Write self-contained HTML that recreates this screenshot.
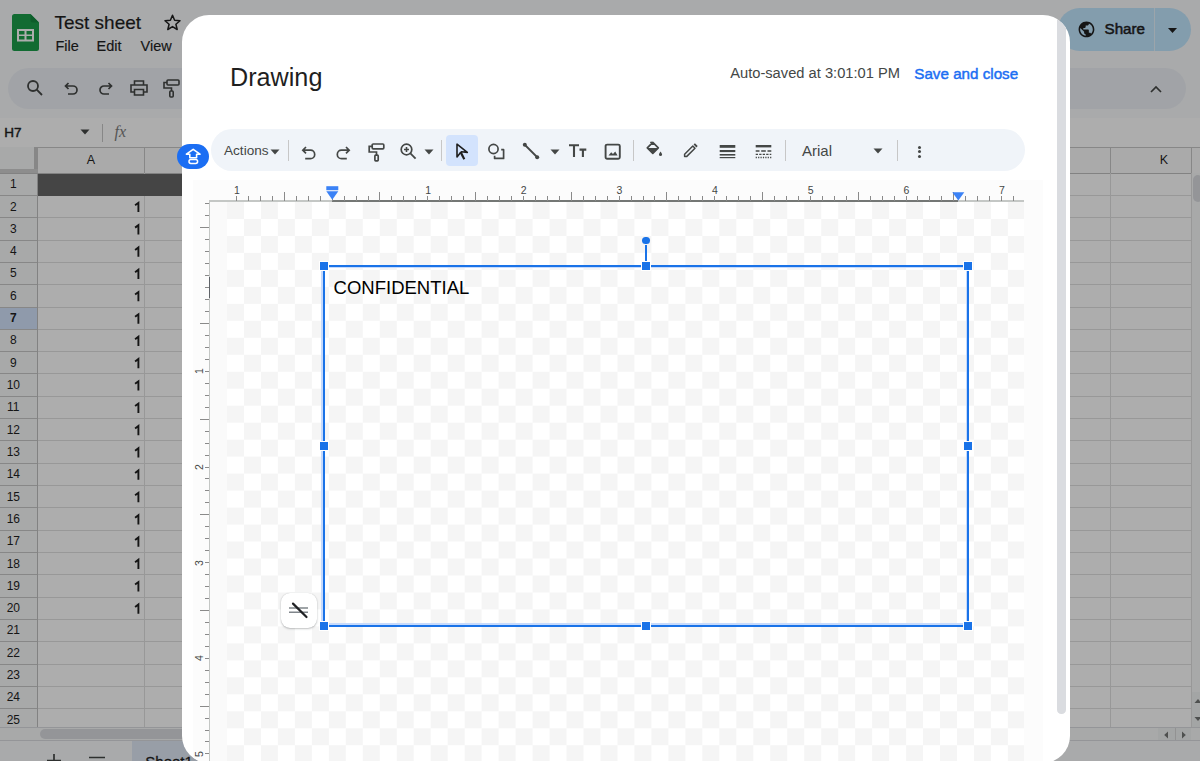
<!DOCTYPE html>
<html><head><meta charset="utf-8"><title>Drawing</title>
<style>
html,body{margin:0;padding:0;}
body{width:1200px;height:761px;position:relative;overflow:hidden;background:#aaabad;font-family:"Liberation Sans", sans-serif;}
.a{position:absolute;}
svg.a{overflow:visible;}
</style></head><body>
<div class="a" id="sheet" style="left:0;top:0;width:1200px;height:761px;background:#f9fbfd;overflow:hidden">
<svg class="a" style="left:12.00px;top:14.00px;" width="27" height="37" viewBox="0 0 27 37"><path d="M2.5 0H18.5L27 8.5V34.5A2.5 2.5 0 0 1 24.5 37H2.5A2.5 2.5 0 0 1 0 34.5V2.5A2.5 2.5 0 0 1 2.5 0Z" fill="#1b9e4b"/><path d="M18.5 0L27 8.5H20.5A2 2 0 0 1 18.5 6.5Z" fill="#148a3e"/><rect x="5" y="15" width="17" height="12.5" fill="#ffffff"/><rect x="7" y="17" width="5.5" height="3.5" fill="#1b9e4b"/><rect x="14.5" y="17" width="5.5" height="3.5" fill="#1b9e4b"/><rect x="7" y="22" width="5.5" height="3.5" fill="#1b9e4b"/><rect x="14.5" y="22" width="5.5" height="3.5" fill="#1b9e4b"/></svg>
<div class="a" style="left:54.50px;top:12.82px;font-size:19px;line-height:1;color:#1f1f1f;font-weight:normal;white-space:nowrap;font-family:'Liberation Sans', sans-serif;-webkit-text-stroke:0.2px #1f1f1f;">Test sheet</div>
<svg class="a" style="left:163.00px;top:13.00px;" width="19" height="19" viewBox="0 0 19 19"><path d="M9.5 2.2L11.6 7.3L17 7.7L12.9 11.2L14.2 16.5L9.5 13.6L4.8 16.5L6.1 11.2L2 7.7L7.4 7.3Z" fill="none" stroke="#1f1f1f" stroke-width="1.5" stroke-linejoin="round"/></svg>
<div class="a" style="left:55.50px;top:39.23px;font-size:14.5px;line-height:1;color:#1f1f1f;font-weight:normal;white-space:nowrap;font-family:'Liberation Sans', sans-serif;-webkit-text-stroke:0.15px #1f1f1f;">File</div>
<div class="a" style="left:96.50px;top:39.23px;font-size:14.5px;line-height:1;color:#1f1f1f;font-weight:normal;white-space:nowrap;font-family:'Liberation Sans', sans-serif;-webkit-text-stroke:0.15px #1f1f1f;">Edit</div>
<div class="a" style="left:140.50px;top:39.23px;font-size:14.5px;line-height:1;color:#1f1f1f;font-weight:normal;white-space:nowrap;font-family:'Liberation Sans', sans-serif;-webkit-text-stroke:0.15px #1f1f1f;">View</div>
<div class="a" style="left:0.00px;top:117.50px;width:1200.00px;height:29.60px;background:#ffffff;"></div>
<div class="a" style="left:7.50px;top:67.50px;width:1178.50px;height:41.50px;background:#eef1f6;border-radius:21px;"></div>
<svg class="a" style="left:26.00px;top:79.00px;" width="18" height="18" viewBox="0 0 18 18"><circle cx="7" cy="7" r="5" fill="none" stroke="#444746" stroke-width="1.8"/><path d="M10.7 10.7L16 16" stroke="#444746" stroke-width="1.8"/></svg>
<svg class="a" style="left:64.00px;top:80.00px;" width="15" height="15" viewBox="0 0 15 15"><path d="M4.5 3L1.5 6L4.5 9M1.8 6H9A4 4 0 0 1 9 14H4" fill="none" stroke="#444746" stroke-width="1.7"/></svg>
<svg class="a" style="left:98.00px;top:80.00px;" width="15" height="15" viewBox="0 0 15 15"><path d="M10.5 3L13.5 6L10.5 9M13.2 6H6A4 4 0 0 0 6 14H11" fill="none" stroke="#444746" stroke-width="1.7"/></svg>
<svg class="a" style="left:130.00px;top:80.00px;" width="18" height="16" viewBox="0 0 18 16"><path d="M4.5 4.5V1H13.5V4.5M4.5 12H1V5H17V12H13.5M4.5 9.5H13.5V15H4.5Z" fill="none" stroke="#444746" stroke-width="1.6"/></svg>
<svg class="a" style="left:163.00px;top:79.00px;" width="17" height="19" viewBox="0 0 17 19"><rect x="4" y="1" width="12" height="5" rx="1" fill="none" stroke="#444746" stroke-width="1.6"/><path d="M4 3.5H1V9H8.5V12" fill="none" stroke="#444746" stroke-width="1.6"/><rect x="6.8" y="12" width="3.4" height="6" rx="1" fill="none" stroke="#444746" stroke-width="1.6"/></svg>
<svg class="a" style="left:1149.00px;top:84.00px;" width="14" height="10" viewBox="0 0 14 10"><path d="M2 8L7 3L12 8" fill="none" stroke="#444746" stroke-width="1.7"/></svg>
<div class="a" style="left:1057.50px;top:8.00px;width:133.00px;height:43.00px;background:#c2e7ff;border-radius:21.5px;"></div>
<div class="a" style="left:1154.20px;top:8.00px;width:1.00px;height:43.00px;background:#e6f4fd;"></div>
<svg class="a" style="left:1076.80px;top:19.60px;" width="18.96" height="18.96" viewBox="0 0 24 24"><path fill="#1f1f1f" d="M12 2C6.48 2 2 6.48 2 12s4.48 10 10 10 10-4.48 10-10S17.52 2 12 2zm-1 17.93c-3.95-.49-7-3.85-7-7.93 0-.62.08-1.21.21-1.79L9 15v1c0 1.1.9 2 2 2v1.930zm6.9-2.54c-.26-.81-1-1.39-1.9-1.39h-1v-3c0-.55-.45-1-1-1H8v-2h2c.55 0 1-.45 1-1V7h2c1.1 0 2-.9 2-2v-.41c2.93 1.19 5 4.06 5 7.41 0 2.080-.8 3.97-2.1 5.39z"/></svg>
<div class="a" style="left:1104.50px;top:21.33px;font-size:15.2px;line-height:1;color:#1f1f1f;font-weight:normal;white-space:nowrap;font-family:'Liberation Sans', sans-serif;-webkit-text-stroke:0.5px #1f1f1f;">Share</div>
<svg class="a" style="left:1167.00px;top:27.00px;" width="11" height="7" viewBox="0 0 11 7"><path d="M1 1H10L5.5 6Z" fill="#1f1f1f"/></svg>
<div class="a" style="left:4.30px;top:125.57px;font-size:13.5px;line-height:1;color:#1f1f1f;font-weight:normal;white-space:nowrap;font-family:'Liberation Sans', sans-serif;-webkit-text-stroke:0.45px #1f1f1f;">H7</div>
<svg class="a" style="left:80.00px;top:129.00px;" width="10" height="6" viewBox="0 0 10 6"><path d="M0.5 0.5H9.5L5 5.5Z" fill="#444746"/></svg>
<div class="a" style="left:102.00px;top:124.00px;width:1.00px;height:18.00px;background:#c7c7c7;"></div>
<div class="a" style="left:114.50px;top:124.46px;font-size:16px;line-height:1;color:#7d7d7d;font-weight:normal;white-space:nowrap;font-family:'Liberation Serif', serif;font-style:italic;">fx</div>
<div class="a" style="left:0.00px;top:147.10px;width:1200.00px;height:26.10px;background:#fbfbfb;"></div>
<div class="a" style="left:0.00px;top:147.10px;width:1200.00px;height:1.00px;background:#c7c7c7;"></div>
<div class="a" style="left:0.00px;top:147.10px;width:34.00px;height:26.10px;background:#f8f9fa;"></div>
<div class="a" style="left:34.00px;top:147.10px;width:3.50px;height:26.60px;background:#c8c8c8;"></div>
<div class="a" style="left:0.00px;top:169.20px;width:37.50px;height:4.50px;background:#d0d0d0;"></div>
<div class="a" style="left:37.50px;top:173.20px;width:1153.50px;height:553.80px;background:#ffffff;"></div>
<div class="a" style="left:0.00px;top:173.20px;width:37.50px;height:553.80px;background:#f8f9fa;"></div>
<div class="a" style="left:144.00px;top:147.10px;width:1.00px;height:26.10px;background:#c7c7c7;"></div>
<div class="a" style="left:1110.00px;top:147.10px;width:1.00px;height:26.10px;background:#c7c7c7;"></div>
<div class="a" style="left:1191.00px;top:147.10px;width:1.00px;height:26.10px;background:#c7c7c7;"></div>
<div class="a" style="left:0.00px;top:172.70px;width:1200.00px;height:1.00px;background:#c0c0c0;"></div>
<div class="a" style="left:71.00px;width:40px;text-align:center;top:154.42px;font-size:12.5px;line-height:1;color:#1f1f1f;font-weight:normal;white-space:nowrap;font-family:'Liberation Sans', sans-serif;">A</div>
<div class="a" style="left:1144.00px;width:40px;text-align:center;top:154.42px;font-size:12.5px;line-height:1;color:#1f1f1f;font-weight:normal;white-space:nowrap;font-family:'Liberation Sans', sans-serif;">K</div>
<div class="a" style="left:0.00px;top:195.01px;width:37.50px;height:1.00px;background:#c7c7c7;"></div>
<div class="a" style="left:37.50px;top:195.01px;width:1153.50px;height:1.00px;background:#e1e1e1;"></div>
<div class="a" style="left:0.00px;top:217.32px;width:37.50px;height:1.00px;background:#c7c7c7;"></div>
<div class="a" style="left:37.50px;top:217.32px;width:1153.50px;height:1.00px;background:#e1e1e1;"></div>
<div class="a" style="left:0.00px;top:239.63px;width:37.50px;height:1.00px;background:#c7c7c7;"></div>
<div class="a" style="left:37.50px;top:239.63px;width:1153.50px;height:1.00px;background:#e1e1e1;"></div>
<div class="a" style="left:0.00px;top:261.94px;width:37.50px;height:1.00px;background:#c7c7c7;"></div>
<div class="a" style="left:37.50px;top:261.94px;width:1153.50px;height:1.00px;background:#e1e1e1;"></div>
<div class="a" style="left:0.00px;top:284.25px;width:37.50px;height:1.00px;background:#c7c7c7;"></div>
<div class="a" style="left:37.50px;top:284.25px;width:1153.50px;height:1.00px;background:#e1e1e1;"></div>
<div class="a" style="left:0.00px;top:306.56px;width:37.50px;height:1.00px;background:#c7c7c7;"></div>
<div class="a" style="left:37.50px;top:306.56px;width:1153.50px;height:1.00px;background:#e1e1e1;"></div>
<div class="a" style="left:0.00px;top:328.87px;width:37.50px;height:1.00px;background:#c7c7c7;"></div>
<div class="a" style="left:37.50px;top:328.87px;width:1153.50px;height:1.00px;background:#e1e1e1;"></div>
<div class="a" style="left:0.00px;top:351.18px;width:37.50px;height:1.00px;background:#c7c7c7;"></div>
<div class="a" style="left:37.50px;top:351.18px;width:1153.50px;height:1.00px;background:#e1e1e1;"></div>
<div class="a" style="left:0.00px;top:373.49px;width:37.50px;height:1.00px;background:#c7c7c7;"></div>
<div class="a" style="left:37.50px;top:373.49px;width:1153.50px;height:1.00px;background:#e1e1e1;"></div>
<div class="a" style="left:0.00px;top:395.80px;width:37.50px;height:1.00px;background:#c7c7c7;"></div>
<div class="a" style="left:37.50px;top:395.80px;width:1153.50px;height:1.00px;background:#e1e1e1;"></div>
<div class="a" style="left:0.00px;top:418.11px;width:37.50px;height:1.00px;background:#c7c7c7;"></div>
<div class="a" style="left:37.50px;top:418.11px;width:1153.50px;height:1.00px;background:#e1e1e1;"></div>
<div class="a" style="left:0.00px;top:440.42px;width:37.50px;height:1.00px;background:#c7c7c7;"></div>
<div class="a" style="left:37.50px;top:440.42px;width:1153.50px;height:1.00px;background:#e1e1e1;"></div>
<div class="a" style="left:0.00px;top:462.73px;width:37.50px;height:1.00px;background:#c7c7c7;"></div>
<div class="a" style="left:37.50px;top:462.73px;width:1153.50px;height:1.00px;background:#e1e1e1;"></div>
<div class="a" style="left:0.00px;top:485.04px;width:37.50px;height:1.00px;background:#c7c7c7;"></div>
<div class="a" style="left:37.50px;top:485.04px;width:1153.50px;height:1.00px;background:#e1e1e1;"></div>
<div class="a" style="left:0.00px;top:507.35px;width:37.50px;height:1.00px;background:#c7c7c7;"></div>
<div class="a" style="left:37.50px;top:507.35px;width:1153.50px;height:1.00px;background:#e1e1e1;"></div>
<div class="a" style="left:0.00px;top:529.66px;width:37.50px;height:1.00px;background:#c7c7c7;"></div>
<div class="a" style="left:37.50px;top:529.66px;width:1153.50px;height:1.00px;background:#e1e1e1;"></div>
<div class="a" style="left:0.00px;top:551.97px;width:37.50px;height:1.00px;background:#c7c7c7;"></div>
<div class="a" style="left:37.50px;top:551.97px;width:1153.50px;height:1.00px;background:#e1e1e1;"></div>
<div class="a" style="left:0.00px;top:574.28px;width:37.50px;height:1.00px;background:#c7c7c7;"></div>
<div class="a" style="left:37.50px;top:574.28px;width:1153.50px;height:1.00px;background:#e1e1e1;"></div>
<div class="a" style="left:0.00px;top:596.59px;width:37.50px;height:1.00px;background:#c7c7c7;"></div>
<div class="a" style="left:37.50px;top:596.59px;width:1153.50px;height:1.00px;background:#e1e1e1;"></div>
<div class="a" style="left:0.00px;top:618.90px;width:37.50px;height:1.00px;background:#c7c7c7;"></div>
<div class="a" style="left:37.50px;top:618.90px;width:1153.50px;height:1.00px;background:#e1e1e1;"></div>
<div class="a" style="left:0.00px;top:641.21px;width:37.50px;height:1.00px;background:#c7c7c7;"></div>
<div class="a" style="left:37.50px;top:641.21px;width:1153.50px;height:1.00px;background:#e1e1e1;"></div>
<div class="a" style="left:0.00px;top:663.52px;width:37.50px;height:1.00px;background:#c7c7c7;"></div>
<div class="a" style="left:37.50px;top:663.52px;width:1153.50px;height:1.00px;background:#e1e1e1;"></div>
<div class="a" style="left:0.00px;top:685.83px;width:37.50px;height:1.00px;background:#c7c7c7;"></div>
<div class="a" style="left:37.50px;top:685.83px;width:1153.50px;height:1.00px;background:#e1e1e1;"></div>
<div class="a" style="left:0.00px;top:708.14px;width:37.50px;height:1.00px;background:#c7c7c7;"></div>
<div class="a" style="left:37.50px;top:708.14px;width:1153.50px;height:1.00px;background:#e1e1e1;"></div>
<div class="a" style="left:0.00px;top:730.45px;width:37.50px;height:1.00px;background:#c7c7c7;"></div>
<div class="a" style="left:37.50px;top:730.45px;width:1153.50px;height:1.00px;background:#e1e1e1;"></div>
<div class="a" style="left:37.00px;top:173.20px;width:1.00px;height:553.80px;background:#c0c0c0;"></div>
<div class="a" style="left:144.00px;top:173.20px;width:1.00px;height:553.80px;background:#e1e1e1;"></div>
<div class="a" style="left:1110.00px;top:173.20px;width:1.00px;height:553.80px;background:#e1e1e1;"></div>
<div class="a" style="left:1191.00px;top:173.20px;width:1.00px;height:553.80px;background:#e1e1e1;"></div>
<div class="a" style="left:38.00px;top:173.70px;width:1032.00px;height:22.31px;background:#666666;"></div>
<div class="a" style="left:0.00px;top:307.56px;width:37.00px;height:21.31px;background:#d3e3fd;"></div>
<div class="a" style="left:-1.70px;width:30px;text-align:center;top:178.24px;font-size:12px;line-height:1;color:#1f1f1f;font-weight:normal;white-space:nowrap;font-family:'Liberation Sans', sans-serif;">1</div>
<div class="a" style="left:-1.70px;width:30px;text-align:center;top:200.55px;font-size:12px;line-height:1;color:#1f1f1f;font-weight:normal;white-space:nowrap;font-family:'Liberation Sans', sans-serif;">2</div>
<svg class="a" style="left:0.00px;top:0.00px;" width="1" height="1" viewBox="0 0 1 1"><path d="M135.1 205.31L138.4 202.81V212.11" fill="none" stroke="#1f1f1f" stroke-width="1.9"/></svg>
<div class="a" style="left:-1.70px;width:30px;text-align:center;top:222.86px;font-size:12px;line-height:1;color:#1f1f1f;font-weight:normal;white-space:nowrap;font-family:'Liberation Sans', sans-serif;">3</div>
<svg class="a" style="left:0.00px;top:0.00px;" width="1" height="1" viewBox="0 0 1 1"><path d="M135.1 227.62L138.4 225.12V234.42" fill="none" stroke="#1f1f1f" stroke-width="1.9"/></svg>
<div class="a" style="left:-1.70px;width:30px;text-align:center;top:245.17px;font-size:12px;line-height:1;color:#1f1f1f;font-weight:normal;white-space:nowrap;font-family:'Liberation Sans', sans-serif;">4</div>
<svg class="a" style="left:0.00px;top:0.00px;" width="1" height="1" viewBox="0 0 1 1"><path d="M135.1 249.93L138.4 247.43V256.73" fill="none" stroke="#1f1f1f" stroke-width="1.9"/></svg>
<div class="a" style="left:-1.70px;width:30px;text-align:center;top:267.48px;font-size:12px;line-height:1;color:#1f1f1f;font-weight:normal;white-space:nowrap;font-family:'Liberation Sans', sans-serif;">5</div>
<svg class="a" style="left:0.00px;top:0.00px;" width="1" height="1" viewBox="0 0 1 1"><path d="M135.1 272.24L138.4 269.74V279.04" fill="none" stroke="#1f1f1f" stroke-width="1.9"/></svg>
<div class="a" style="left:-1.70px;width:30px;text-align:center;top:289.79px;font-size:12px;line-height:1;color:#1f1f1f;font-weight:normal;white-space:nowrap;font-family:'Liberation Sans', sans-serif;">6</div>
<svg class="a" style="left:0.00px;top:0.00px;" width="1" height="1" viewBox="0 0 1 1"><path d="M135.1 294.55L138.4 292.05V301.35" fill="none" stroke="#1f1f1f" stroke-width="1.9"/></svg>
<div class="a" style="left:-1.70px;width:30px;text-align:center;top:312.10px;font-size:12px;line-height:1;color:#1f1f1f;font-weight:bold;white-space:nowrap;font-family:'Liberation Sans', sans-serif;">7</div>
<svg class="a" style="left:0.00px;top:0.00px;" width="1" height="1" viewBox="0 0 1 1"><path d="M135.1 316.86L138.4 314.36V323.66" fill="none" stroke="#1f1f1f" stroke-width="1.9"/></svg>
<div class="a" style="left:-1.70px;width:30px;text-align:center;top:334.41px;font-size:12px;line-height:1;color:#1f1f1f;font-weight:normal;white-space:nowrap;font-family:'Liberation Sans', sans-serif;">8</div>
<svg class="a" style="left:0.00px;top:0.00px;" width="1" height="1" viewBox="0 0 1 1"><path d="M135.1 339.17L138.4 336.67V345.97" fill="none" stroke="#1f1f1f" stroke-width="1.9"/></svg>
<div class="a" style="left:-1.70px;width:30px;text-align:center;top:356.72px;font-size:12px;line-height:1;color:#1f1f1f;font-weight:normal;white-space:nowrap;font-family:'Liberation Sans', sans-serif;">9</div>
<svg class="a" style="left:0.00px;top:0.00px;" width="1" height="1" viewBox="0 0 1 1"><path d="M135.1 361.48L138.4 358.98V368.28" fill="none" stroke="#1f1f1f" stroke-width="1.9"/></svg>
<div class="a" style="left:-1.70px;width:30px;text-align:center;top:379.03px;font-size:12px;line-height:1;color:#1f1f1f;font-weight:normal;white-space:nowrap;font-family:'Liberation Sans', sans-serif;">10</div>
<svg class="a" style="left:0.00px;top:0.00px;" width="1" height="1" viewBox="0 0 1 1"><path d="M135.1 383.79L138.4 381.29V390.59" fill="none" stroke="#1f1f1f" stroke-width="1.9"/></svg>
<div class="a" style="left:-1.70px;width:30px;text-align:center;top:401.34px;font-size:12px;line-height:1;color:#1f1f1f;font-weight:normal;white-space:nowrap;font-family:'Liberation Sans', sans-serif;">11</div>
<svg class="a" style="left:0.00px;top:0.00px;" width="1" height="1" viewBox="0 0 1 1"><path d="M135.1 406.10L138.4 403.60V412.90" fill="none" stroke="#1f1f1f" stroke-width="1.9"/></svg>
<div class="a" style="left:-1.70px;width:30px;text-align:center;top:423.65px;font-size:12px;line-height:1;color:#1f1f1f;font-weight:normal;white-space:nowrap;font-family:'Liberation Sans', sans-serif;">12</div>
<svg class="a" style="left:0.00px;top:0.00px;" width="1" height="1" viewBox="0 0 1 1"><path d="M135.1 428.41L138.4 425.91V435.21" fill="none" stroke="#1f1f1f" stroke-width="1.9"/></svg>
<div class="a" style="left:-1.70px;width:30px;text-align:center;top:445.96px;font-size:12px;line-height:1;color:#1f1f1f;font-weight:normal;white-space:nowrap;font-family:'Liberation Sans', sans-serif;">13</div>
<svg class="a" style="left:0.00px;top:0.00px;" width="1" height="1" viewBox="0 0 1 1"><path d="M135.1 450.72L138.4 448.22V457.52" fill="none" stroke="#1f1f1f" stroke-width="1.9"/></svg>
<div class="a" style="left:-1.70px;width:30px;text-align:center;top:468.27px;font-size:12px;line-height:1;color:#1f1f1f;font-weight:normal;white-space:nowrap;font-family:'Liberation Sans', sans-serif;">14</div>
<svg class="a" style="left:0.00px;top:0.00px;" width="1" height="1" viewBox="0 0 1 1"><path d="M135.1 473.03L138.4 470.53V479.83" fill="none" stroke="#1f1f1f" stroke-width="1.9"/></svg>
<div class="a" style="left:-1.70px;width:30px;text-align:center;top:490.58px;font-size:12px;line-height:1;color:#1f1f1f;font-weight:normal;white-space:nowrap;font-family:'Liberation Sans', sans-serif;">15</div>
<svg class="a" style="left:0.00px;top:0.00px;" width="1" height="1" viewBox="0 0 1 1"><path d="M135.1 495.34L138.4 492.84V502.14" fill="none" stroke="#1f1f1f" stroke-width="1.9"/></svg>
<div class="a" style="left:-1.70px;width:30px;text-align:center;top:512.89px;font-size:12px;line-height:1;color:#1f1f1f;font-weight:normal;white-space:nowrap;font-family:'Liberation Sans', sans-serif;">16</div>
<svg class="a" style="left:0.00px;top:0.00px;" width="1" height="1" viewBox="0 0 1 1"><path d="M135.1 517.65L138.4 515.15V524.45" fill="none" stroke="#1f1f1f" stroke-width="1.9"/></svg>
<div class="a" style="left:-1.70px;width:30px;text-align:center;top:535.20px;font-size:12px;line-height:1;color:#1f1f1f;font-weight:normal;white-space:nowrap;font-family:'Liberation Sans', sans-serif;">17</div>
<svg class="a" style="left:0.00px;top:0.00px;" width="1" height="1" viewBox="0 0 1 1"><path d="M135.1 539.96L138.4 537.46V546.76" fill="none" stroke="#1f1f1f" stroke-width="1.9"/></svg>
<div class="a" style="left:-1.70px;width:30px;text-align:center;top:557.51px;font-size:12px;line-height:1;color:#1f1f1f;font-weight:normal;white-space:nowrap;font-family:'Liberation Sans', sans-serif;">18</div>
<svg class="a" style="left:0.00px;top:0.00px;" width="1" height="1" viewBox="0 0 1 1"><path d="M135.1 562.27L138.4 559.77V569.07" fill="none" stroke="#1f1f1f" stroke-width="1.9"/></svg>
<div class="a" style="left:-1.70px;width:30px;text-align:center;top:579.82px;font-size:12px;line-height:1;color:#1f1f1f;font-weight:normal;white-space:nowrap;font-family:'Liberation Sans', sans-serif;">19</div>
<svg class="a" style="left:0.00px;top:0.00px;" width="1" height="1" viewBox="0 0 1 1"><path d="M135.1 584.58L138.4 582.08V591.38" fill="none" stroke="#1f1f1f" stroke-width="1.9"/></svg>
<div class="a" style="left:-1.70px;width:30px;text-align:center;top:602.13px;font-size:12px;line-height:1;color:#1f1f1f;font-weight:normal;white-space:nowrap;font-family:'Liberation Sans', sans-serif;">20</div>
<svg class="a" style="left:0.00px;top:0.00px;" width="1" height="1" viewBox="0 0 1 1"><path d="M135.1 606.89L138.4 604.39V613.69" fill="none" stroke="#1f1f1f" stroke-width="1.9"/></svg>
<div class="a" style="left:-1.70px;width:30px;text-align:center;top:624.44px;font-size:12px;line-height:1;color:#1f1f1f;font-weight:normal;white-space:nowrap;font-family:'Liberation Sans', sans-serif;">21</div>
<div class="a" style="left:-1.70px;width:30px;text-align:center;top:646.75px;font-size:12px;line-height:1;color:#1f1f1f;font-weight:normal;white-space:nowrap;font-family:'Liberation Sans', sans-serif;">22</div>
<div class="a" style="left:-1.70px;width:30px;text-align:center;top:669.06px;font-size:12px;line-height:1;color:#1f1f1f;font-weight:normal;white-space:nowrap;font-family:'Liberation Sans', sans-serif;">23</div>
<div class="a" style="left:-1.70px;width:30px;text-align:center;top:691.37px;font-size:12px;line-height:1;color:#1f1f1f;font-weight:normal;white-space:nowrap;font-family:'Liberation Sans', sans-serif;">24</div>
<div class="a" style="left:-1.70px;width:30px;text-align:center;top:713.68px;font-size:12px;line-height:1;color:#1f1f1f;font-weight:normal;white-space:nowrap;font-family:'Liberation Sans', sans-serif;">25</div>
<div class="a" style="left:1191.50px;top:173.20px;width:8.50px;height:553.80px;background:#f8f9fa;"></div>
<div class="a" style="left:1193.30px;top:175.30px;width:9.70px;height:26.40px;background:#dadce0;border-radius:5px;"></div>
<div class="a" style="left:1191.50px;top:692.00px;width:8.50px;height:17.50px;background:#f1f3f4;"></div>
<div class="a" style="left:1191.50px;top:709.50px;width:8.50px;height:17.50px;background:#f1f3f4;"></div>
<svg class="a" style="left:1194.00px;top:698.00px;" width="7" height="6" viewBox="0 0 7 6"><path d="M0.5 5H7.5L4 1Z" fill="#747775"/></svg>
<svg class="a" style="left:1194.00px;top:716.00px;" width="7" height="6" viewBox="0 0 7 6"><path d="M0.5 1H7.5L4 5Z" fill="#747775"/></svg>
<div class="a" style="left:0.00px;top:727.00px;width:1200.00px;height:13.40px;background:#f8f9fa;"></div>
<div class="a" style="left:0.00px;top:727.00px;width:1200.00px;height:0.70px;background:#dadce0;"></div>
<div class="a" style="left:40.40px;top:729.30px;width:1019.60px;height:9.50px;background:#dadce0;border-radius:5px;"></div>
<div class="a" style="left:1158.00px;top:727.50px;width:33.00px;height:12.90px;background:#f1f3f4;"></div>
<div class="a" style="left:1174.50px;top:727.50px;width:0.80px;height:12.90px;background:#d8d8d8;"></div>
<svg class="a" style="left:1163.00px;top:730.50px;" width="6" height="8" viewBox="0 0 6 8"><path d="M5 0.5V7.5L1.2 4Z" fill="#747775"/></svg>
<svg class="a" style="left:1181.00px;top:730.50px;" width="6" height="8" viewBox="0 0 6 8"><path d="M1 0.5V7.5L4.8 4Z" fill="#747775"/></svg>
<div class="a" style="left:0.00px;top:740.40px;width:1200.00px;height:0.80px;background:#dadce0;"></div>
<div class="a" style="left:0.00px;top:741.00px;width:1200.00px;height:20.00px;background:#f9fbfd;"></div>
<svg class="a" style="left:47.00px;top:753.00px;" width="14" height="16" viewBox="0 0 14 16"><path d="M7 1V16M0 7.5H14" stroke="#444746" stroke-width="1.7"/></svg>
<svg class="a" style="left:88.00px;top:755.50px;" width="18" height="12" viewBox="0 0 18 12"><path d="M1 1.5H17M1 6.5H17M1 11.5H17" stroke="#444746" stroke-width="1.7"/></svg>
<div class="a" style="left:132.20px;top:741.00px;width:127.80px;height:20.00px;background:#e1e9f7;"></div>
<div class="a" style="left:145.30px;top:754.30px;font-size:15px;line-height:1;color:#1f1f1f;font-weight:normal;white-space:nowrap;font-family:'Liberation Sans', sans-serif;-webkit-text-stroke:0.3px #1f1f1f;">Sheet1</div>
</div>
<div class="a" style="left:0.00px;top:0.00px;width:1200.00px;height:761.00px;background:rgba(0,0,0,0.32);"></div>
<div class="a" id="dlg" style="left:182px;top:14.5px;width:888px;height:748.5px;background:#fff;border-radius:27px;overflow:hidden">
<div class="a" style="left:-182px;top:-14.5px;width:1200px;height:761px">
<div class="a" style="left:230.00px;top:65.47px;font-size:25.2px;line-height:1;color:#1f1f1f;font-weight:normal;white-space:nowrap;font-family:'Liberation Sans', sans-serif;">Drawing</div>
<div class="a" style="left:680.00px;width:220px;text-align:right;top:66.36px;font-size:14.7px;line-height:1;color:#444746;font-weight:normal;white-space:nowrap;font-family:'Liberation Sans', sans-serif;">Auto-saved at 3:01:01 PM</div>
<div class="a" style="left:914.30px;top:65.93px;font-size:15.2px;line-height:1;color:#1b6ef3;font-weight:normal;white-space:nowrap;font-family:'Liberation Sans', sans-serif;-webkit-text-stroke:0.45px #1b6ef3;">Save and close</div>
<div class="a" style="left:1057.40px;top:10.00px;width:8.60px;height:704.40px;background:#dadce0;border-radius:4.3px;"></div>
<div class="a" style="left:192.50px;top:180.00px;width:850.70px;height:581.00px;background:#fcfcfc;"></div>
<div class="a" style="left:209.30px;top:201.60px;width:815.00px;height:559.40px;background:#ffffff;"></div>
<div class="a" style="left:209.30px;top:201.60px;width:18.00px;height:559.40px;background:#fafafa;"></div>
<div class="a" style="left:227.3px;top:201.6px;width:797.00px;height:559.40px;background-image:conic-gradient(#fff 0 25%,#f5f5f5 0 50%,#fff 0 75%,#f5f5f5 0);background-size:33.960px 33.960px;background-position:0 0;"></div>
<div class="a" style="left:209.30px;top:200.20px;width:814.60px;height:1.40px;background:#c4c7c5;"></div>
<div class="a" style="left:332.15px;top:200.10px;width:626.35px;height:1.60px;background:#747775;"></div>
<div class="a" style="left:236.00px;top:196.30px;width:1.00px;height:4.60px;background:#8a8a8a;"></div>
<div class="a" style="left:226.80px;width:20px;text-align:center;top:185.31px;font-size:10.5px;line-height:1;color:#444746;font-weight:normal;white-space:nowrap;font-family:'Liberation Sans', sans-serif;">1</div>
<div class="a" style="left:247.96px;top:196.30px;width:1.00px;height:4.60px;background:#8a8a8a;"></div>
<div class="a" style="left:259.91px;top:196.30px;width:1.00px;height:4.60px;background:#8a8a8a;"></div>
<div class="a" style="left:271.87px;top:196.30px;width:1.00px;height:4.60px;background:#8a8a8a;"></div>
<div class="a" style="left:283.82px;top:191.80px;width:1.00px;height:9.10px;background:#8a8a8a;"></div>
<div class="a" style="left:295.78px;top:196.30px;width:1.00px;height:4.60px;background:#8a8a8a;"></div>
<div class="a" style="left:307.74px;top:196.30px;width:1.00px;height:4.60px;background:#8a8a8a;"></div>
<div class="a" style="left:319.69px;top:196.30px;width:1.00px;height:4.60px;background:#8a8a8a;"></div>
<div class="a" style="left:331.65px;top:196.30px;width:1.00px;height:4.60px;background:#8a8a8a;"></div>
<div class="a" style="left:343.60px;top:196.30px;width:1.00px;height:4.60px;background:#8a8a8a;"></div>
<div class="a" style="left:355.56px;top:196.30px;width:1.00px;height:4.60px;background:#8a8a8a;"></div>
<div class="a" style="left:367.52px;top:196.30px;width:1.00px;height:4.60px;background:#8a8a8a;"></div>
<div class="a" style="left:379.47px;top:191.80px;width:1.00px;height:9.10px;background:#8a8a8a;"></div>
<div class="a" style="left:391.43px;top:196.30px;width:1.00px;height:4.60px;background:#8a8a8a;"></div>
<div class="a" style="left:403.38px;top:196.30px;width:1.00px;height:4.60px;background:#8a8a8a;"></div>
<div class="a" style="left:415.34px;top:196.30px;width:1.00px;height:4.60px;background:#8a8a8a;"></div>
<div class="a" style="left:427.30px;top:196.30px;width:1.00px;height:4.60px;background:#8a8a8a;"></div>
<div class="a" style="left:418.10px;width:20px;text-align:center;top:185.31px;font-size:10.5px;line-height:1;color:#444746;font-weight:normal;white-space:nowrap;font-family:'Liberation Sans', sans-serif;">1</div>
<div class="a" style="left:439.25px;top:196.30px;width:1.00px;height:4.60px;background:#8a8a8a;"></div>
<div class="a" style="left:451.21px;top:196.30px;width:1.00px;height:4.60px;background:#8a8a8a;"></div>
<div class="a" style="left:463.16px;top:196.30px;width:1.00px;height:4.60px;background:#8a8a8a;"></div>
<div class="a" style="left:475.12px;top:191.80px;width:1.00px;height:9.10px;background:#8a8a8a;"></div>
<div class="a" style="left:487.08px;top:196.30px;width:1.00px;height:4.60px;background:#8a8a8a;"></div>
<div class="a" style="left:499.03px;top:196.30px;width:1.00px;height:4.60px;background:#8a8a8a;"></div>
<div class="a" style="left:510.99px;top:196.30px;width:1.00px;height:4.60px;background:#8a8a8a;"></div>
<div class="a" style="left:522.94px;top:196.30px;width:1.00px;height:4.60px;background:#8a8a8a;"></div>
<div class="a" style="left:513.74px;width:20px;text-align:center;top:185.31px;font-size:10.5px;line-height:1;color:#444746;font-weight:normal;white-space:nowrap;font-family:'Liberation Sans', sans-serif;">2</div>
<div class="a" style="left:534.90px;top:196.30px;width:1.00px;height:4.60px;background:#8a8a8a;"></div>
<div class="a" style="left:546.86px;top:196.30px;width:1.00px;height:4.60px;background:#8a8a8a;"></div>
<div class="a" style="left:558.81px;top:196.30px;width:1.00px;height:4.60px;background:#8a8a8a;"></div>
<div class="a" style="left:570.77px;top:191.80px;width:1.00px;height:9.10px;background:#8a8a8a;"></div>
<div class="a" style="left:582.72px;top:196.30px;width:1.00px;height:4.60px;background:#8a8a8a;"></div>
<div class="a" style="left:594.68px;top:196.30px;width:1.00px;height:4.60px;background:#8a8a8a;"></div>
<div class="a" style="left:606.64px;top:196.30px;width:1.00px;height:4.60px;background:#8a8a8a;"></div>
<div class="a" style="left:618.59px;top:196.30px;width:1.00px;height:4.60px;background:#8a8a8a;"></div>
<div class="a" style="left:609.39px;width:20px;text-align:center;top:185.31px;font-size:10.5px;line-height:1;color:#444746;font-weight:normal;white-space:nowrap;font-family:'Liberation Sans', sans-serif;">3</div>
<div class="a" style="left:630.55px;top:196.30px;width:1.00px;height:4.60px;background:#8a8a8a;"></div>
<div class="a" style="left:642.50px;top:196.30px;width:1.00px;height:4.60px;background:#8a8a8a;"></div>
<div class="a" style="left:654.46px;top:196.30px;width:1.00px;height:4.60px;background:#8a8a8a;"></div>
<div class="a" style="left:666.42px;top:191.80px;width:1.00px;height:9.10px;background:#8a8a8a;"></div>
<div class="a" style="left:678.37px;top:196.30px;width:1.00px;height:4.60px;background:#8a8a8a;"></div>
<div class="a" style="left:690.33px;top:196.30px;width:1.00px;height:4.60px;background:#8a8a8a;"></div>
<div class="a" style="left:702.28px;top:196.30px;width:1.00px;height:4.60px;background:#8a8a8a;"></div>
<div class="a" style="left:714.24px;top:196.30px;width:1.00px;height:4.60px;background:#8a8a8a;"></div>
<div class="a" style="left:705.04px;width:20px;text-align:center;top:185.31px;font-size:10.5px;line-height:1;color:#444746;font-weight:normal;white-space:nowrap;font-family:'Liberation Sans', sans-serif;">4</div>
<div class="a" style="left:726.20px;top:196.30px;width:1.00px;height:4.60px;background:#8a8a8a;"></div>
<div class="a" style="left:738.15px;top:196.30px;width:1.00px;height:4.60px;background:#8a8a8a;"></div>
<div class="a" style="left:750.11px;top:196.30px;width:1.00px;height:4.60px;background:#8a8a8a;"></div>
<div class="a" style="left:762.06px;top:191.80px;width:1.00px;height:9.10px;background:#8a8a8a;"></div>
<div class="a" style="left:774.02px;top:196.30px;width:1.00px;height:4.60px;background:#8a8a8a;"></div>
<div class="a" style="left:785.98px;top:196.30px;width:1.00px;height:4.60px;background:#8a8a8a;"></div>
<div class="a" style="left:797.93px;top:196.30px;width:1.00px;height:4.60px;background:#8a8a8a;"></div>
<div class="a" style="left:809.89px;top:196.30px;width:1.00px;height:4.60px;background:#8a8a8a;"></div>
<div class="a" style="left:800.69px;width:20px;text-align:center;top:185.31px;font-size:10.5px;line-height:1;color:#444746;font-weight:normal;white-space:nowrap;font-family:'Liberation Sans', sans-serif;">5</div>
<div class="a" style="left:821.84px;top:196.30px;width:1.00px;height:4.60px;background:#8a8a8a;"></div>
<div class="a" style="left:833.80px;top:196.30px;width:1.00px;height:4.60px;background:#8a8a8a;"></div>
<div class="a" style="left:845.76px;top:196.30px;width:1.00px;height:4.60px;background:#8a8a8a;"></div>
<div class="a" style="left:857.71px;top:191.80px;width:1.00px;height:9.10px;background:#8a8a8a;"></div>
<div class="a" style="left:869.67px;top:196.30px;width:1.00px;height:4.60px;background:#8a8a8a;"></div>
<div class="a" style="left:881.62px;top:196.30px;width:1.00px;height:4.60px;background:#8a8a8a;"></div>
<div class="a" style="left:893.58px;top:196.30px;width:1.00px;height:4.60px;background:#8a8a8a;"></div>
<div class="a" style="left:905.54px;top:196.30px;width:1.00px;height:4.60px;background:#8a8a8a;"></div>
<div class="a" style="left:896.34px;width:20px;text-align:center;top:185.31px;font-size:10.5px;line-height:1;color:#444746;font-weight:normal;white-space:nowrap;font-family:'Liberation Sans', sans-serif;">6</div>
<div class="a" style="left:917.49px;top:196.30px;width:1.00px;height:4.60px;background:#8a8a8a;"></div>
<div class="a" style="left:929.45px;top:196.30px;width:1.00px;height:4.60px;background:#8a8a8a;"></div>
<div class="a" style="left:941.40px;top:196.30px;width:1.00px;height:4.60px;background:#8a8a8a;"></div>
<div class="a" style="left:953.36px;top:191.80px;width:1.00px;height:9.10px;background:#8a8a8a;"></div>
<div class="a" style="left:965.32px;top:196.30px;width:1.00px;height:4.60px;background:#8a8a8a;"></div>
<div class="a" style="left:977.27px;top:196.30px;width:1.00px;height:4.60px;background:#8a8a8a;"></div>
<div class="a" style="left:989.23px;top:196.30px;width:1.00px;height:4.60px;background:#8a8a8a;"></div>
<div class="a" style="left:1001.18px;top:196.30px;width:1.00px;height:4.60px;background:#8a8a8a;"></div>
<div class="a" style="left:991.98px;width:20px;text-align:center;top:185.31px;font-size:10.5px;line-height:1;color:#444746;font-weight:normal;white-space:nowrap;font-family:'Liberation Sans', sans-serif;">7</div>
<div class="a" style="left:1013.14px;top:196.30px;width:1.00px;height:4.60px;background:#8a8a8a;"></div>
<svg class="a" style="left:325.85px;top:186.40px;" width="12.6" height="14" viewBox="0 0 12.6 14"><rect x="0.3" y="0.2" width="12" height="4" fill="#3b82f6"/><path d="M0.3 5.2H12.3L6.3 13.8Z" fill="#3b82f6"/></svg>
<svg class="a" style="left:952.20px;top:192.00px;" width="12.6" height="9" viewBox="0 0 12.6 9"><path d="M0.3 0.3H12.3L6.3 8.5Z" fill="#3b82f6"/></svg>
<div class="a" style="left:208.60px;top:201.60px;width:1.40px;height:559.40px;background:#c4c7c5;"></div>
<div class="a" style="left:208.60px;top:276.60px;width:1.20px;height:21.00px;background:#5f6368;"></div>
<div class="a" style="left:204.70px;top:203.46px;width:4.60px;height:1.00px;background:#8a8a8a;"></div>
<div class="a" style="left:204.70px;top:215.42px;width:4.60px;height:1.00px;background:#8a8a8a;"></div>
<div class="a" style="left:200.30px;top:227.38px;width:9.00px;height:1.00px;background:#8a8a8a;"></div>
<div class="a" style="left:204.70px;top:239.33px;width:4.60px;height:1.00px;background:#8a8a8a;"></div>
<div class="a" style="left:204.70px;top:251.29px;width:4.60px;height:1.00px;background:#8a8a8a;"></div>
<div class="a" style="left:204.70px;top:263.24px;width:4.60px;height:1.00px;background:#8a8a8a;"></div>
<div class="a" style="left:204.70px;top:275.20px;width:4.60px;height:1.00px;background:#8a8a8a;"></div>
<div class="a" style="left:204.70px;top:287.16px;width:4.60px;height:1.00px;background:#8a8a8a;"></div>
<div class="a" style="left:204.70px;top:299.11px;width:4.60px;height:1.00px;background:#8a8a8a;"></div>
<div class="a" style="left:204.70px;top:311.07px;width:4.60px;height:1.00px;background:#8a8a8a;"></div>
<div class="a" style="left:200.30px;top:323.02px;width:9.00px;height:1.00px;background:#8a8a8a;"></div>
<div class="a" style="left:204.70px;top:334.98px;width:4.60px;height:1.00px;background:#8a8a8a;"></div>
<div class="a" style="left:204.70px;top:346.94px;width:4.60px;height:1.00px;background:#8a8a8a;"></div>
<div class="a" style="left:204.70px;top:358.89px;width:4.60px;height:1.00px;background:#8a8a8a;"></div>
<div class="a" style="left:204.70px;top:370.85px;width:4.60px;height:1.00px;background:#8a8a8a;"></div>
<div class="a" style="left:188.50px;top:365.35px;width:20px;height:12px;line-height:12px;text-align:center;font-size:10.5px;color:#444746;transform:rotate(-90deg);">1</div>
<div class="a" style="left:204.70px;top:382.80px;width:4.60px;height:1.00px;background:#8a8a8a;"></div>
<div class="a" style="left:204.70px;top:394.76px;width:4.60px;height:1.00px;background:#8a8a8a;"></div>
<div class="a" style="left:204.70px;top:406.72px;width:4.60px;height:1.00px;background:#8a8a8a;"></div>
<div class="a" style="left:200.30px;top:418.67px;width:9.00px;height:1.00px;background:#8a8a8a;"></div>
<div class="a" style="left:204.70px;top:430.63px;width:4.60px;height:1.00px;background:#8a8a8a;"></div>
<div class="a" style="left:204.70px;top:442.58px;width:4.60px;height:1.00px;background:#8a8a8a;"></div>
<div class="a" style="left:204.70px;top:454.54px;width:4.60px;height:1.00px;background:#8a8a8a;"></div>
<div class="a" style="left:204.70px;top:466.50px;width:4.60px;height:1.00px;background:#8a8a8a;"></div>
<div class="a" style="left:188.50px;top:461.00px;width:20px;height:12px;line-height:12px;text-align:center;font-size:10.5px;color:#444746;transform:rotate(-90deg);">2</div>
<div class="a" style="left:204.70px;top:478.45px;width:4.60px;height:1.00px;background:#8a8a8a;"></div>
<div class="a" style="left:204.70px;top:490.41px;width:4.60px;height:1.00px;background:#8a8a8a;"></div>
<div class="a" style="left:204.70px;top:502.36px;width:4.60px;height:1.00px;background:#8a8a8a;"></div>
<div class="a" style="left:200.30px;top:514.32px;width:9.00px;height:1.00px;background:#8a8a8a;"></div>
<div class="a" style="left:204.70px;top:526.28px;width:4.60px;height:1.00px;background:#8a8a8a;"></div>
<div class="a" style="left:204.70px;top:538.23px;width:4.60px;height:1.00px;background:#8a8a8a;"></div>
<div class="a" style="left:204.70px;top:550.19px;width:4.60px;height:1.00px;background:#8a8a8a;"></div>
<div class="a" style="left:204.70px;top:562.14px;width:4.60px;height:1.00px;background:#8a8a8a;"></div>
<div class="a" style="left:188.50px;top:556.64px;width:20px;height:12px;line-height:12px;text-align:center;font-size:10.5px;color:#444746;transform:rotate(-90deg);">3</div>
<div class="a" style="left:204.70px;top:574.10px;width:4.60px;height:1.00px;background:#8a8a8a;"></div>
<div class="a" style="left:204.70px;top:586.06px;width:4.60px;height:1.00px;background:#8a8a8a;"></div>
<div class="a" style="left:204.70px;top:598.01px;width:4.60px;height:1.00px;background:#8a8a8a;"></div>
<div class="a" style="left:200.30px;top:609.97px;width:9.00px;height:1.00px;background:#8a8a8a;"></div>
<div class="a" style="left:204.70px;top:621.92px;width:4.60px;height:1.00px;background:#8a8a8a;"></div>
<div class="a" style="left:204.70px;top:633.88px;width:4.60px;height:1.00px;background:#8a8a8a;"></div>
<div class="a" style="left:204.70px;top:645.84px;width:4.60px;height:1.00px;background:#8a8a8a;"></div>
<div class="a" style="left:204.70px;top:657.79px;width:4.60px;height:1.00px;background:#8a8a8a;"></div>
<div class="a" style="left:188.50px;top:652.29px;width:20px;height:12px;line-height:12px;text-align:center;font-size:10.5px;color:#444746;transform:rotate(-90deg);">4</div>
<div class="a" style="left:204.70px;top:669.75px;width:4.60px;height:1.00px;background:#8a8a8a;"></div>
<div class="a" style="left:204.70px;top:681.70px;width:4.60px;height:1.00px;background:#8a8a8a;"></div>
<div class="a" style="left:204.70px;top:693.66px;width:4.60px;height:1.00px;background:#8a8a8a;"></div>
<div class="a" style="left:200.30px;top:705.62px;width:9.00px;height:1.00px;background:#8a8a8a;"></div>
<div class="a" style="left:204.70px;top:717.57px;width:4.60px;height:1.00px;background:#8a8a8a;"></div>
<div class="a" style="left:204.70px;top:729.53px;width:4.60px;height:1.00px;background:#8a8a8a;"></div>
<div class="a" style="left:204.70px;top:741.48px;width:4.60px;height:1.00px;background:#8a8a8a;"></div>
<div class="a" style="left:204.70px;top:753.44px;width:4.60px;height:1.00px;background:#8a8a8a;"></div>
<div class="a" style="left:188.50px;top:747.94px;width:20px;height:12px;line-height:12px;text-align:center;font-size:10.5px;color:#444746;transform:rotate(-90deg);">5</div>
<div class="a" style="left:323.70px;top:266.60px;width:644.70px;height:1.50px;background:#c6dafc;"></div>
<div class="a" style="left:323.70px;top:623.20px;width:644.70px;height:1.50px;background:#c6dafc;"></div>
<div class="a" style="left:321.20px;top:265.60px;width:1.50px;height:360.10px;background:#c6dafc;"></div>
<div class="a" style="left:965.90px;top:265.60px;width:1.50px;height:360.10px;background:#c6dafc;"></div>
<div class="a" style="left:322.70px;top:264.60px;width:646.70px;height:2.00px;background:#1a73e8;"></div>
<div class="a" style="left:322.70px;top:624.70px;width:646.70px;height:2.00px;background:#1a73e8;"></div>
<div class="a" style="left:322.70px;top:264.60px;width:2.00px;height:362.10px;background:#1a73e8;"></div>
<div class="a" style="left:967.40px;top:264.60px;width:2.00px;height:362.10px;background:#1a73e8;"></div>
<div class="a" style="left:318.70px;top:260.60px;width:10.00px;height:10.00px;background:#ffffff;"></div>
<div class="a" style="left:319.70px;top:261.60px;width:8.00px;height:8.00px;background:#1a73e8;"></div>
<div class="a" style="left:641.05px;top:260.60px;width:10.00px;height:10.00px;background:#ffffff;"></div>
<div class="a" style="left:642.05px;top:261.60px;width:8.00px;height:8.00px;background:#1a73e8;"></div>
<div class="a" style="left:963.40px;top:260.60px;width:10.00px;height:10.00px;background:#ffffff;"></div>
<div class="a" style="left:964.40px;top:261.60px;width:8.00px;height:8.00px;background:#1a73e8;"></div>
<div class="a" style="left:318.70px;top:440.65px;width:10.00px;height:10.00px;background:#ffffff;"></div>
<div class="a" style="left:319.70px;top:441.65px;width:8.00px;height:8.00px;background:#1a73e8;"></div>
<div class="a" style="left:963.40px;top:440.65px;width:10.00px;height:10.00px;background:#ffffff;"></div>
<div class="a" style="left:964.40px;top:441.65px;width:8.00px;height:8.00px;background:#1a73e8;"></div>
<div class="a" style="left:318.70px;top:620.70px;width:10.00px;height:10.00px;background:#ffffff;"></div>
<div class="a" style="left:319.70px;top:621.70px;width:8.00px;height:8.00px;background:#1a73e8;"></div>
<div class="a" style="left:641.05px;top:620.70px;width:10.00px;height:10.00px;background:#ffffff;"></div>
<div class="a" style="left:642.05px;top:621.70px;width:8.00px;height:8.00px;background:#1a73e8;"></div>
<div class="a" style="left:963.40px;top:620.70px;width:10.00px;height:10.00px;background:#ffffff;"></div>
<div class="a" style="left:964.40px;top:621.70px;width:8.00px;height:8.00px;background:#1a73e8;"></div>
<div class="a" style="left:645.40px;top:245.20px;width:1.30px;height:16.30px;background:#1a73e8;"></div>
<div class="a" style="left:642.35px;top:236.60px;width:7.4px;height:7.4px;border-radius:50%;background:#1a73e8"></div>
<div class="a" style="left:333.60px;top:278.84px;font-size:18.5px;line-height:1;color:#000000;font-weight:normal;white-space:nowrap;font-family:'Liberation Sans', sans-serif;">CONFIDENTIAL</div>
<div class="a" style="left:281.4px;top:592.6px;width:35.5px;height:35.4px;border-radius:9px;background:#fff;box-shadow:0 1px 2px rgba(60,64,67,0.3),0 0 1px rgba(60,64,67,0.25);"></div>
<svg class="a" style="left:281.40px;top:592.60px;" width="36" height="36" viewBox="0 0 36 36"><path d="M8 15H27M8 19.3H27" stroke="#80868b" stroke-width="1.6"/><path d="M12 10.6L25.5 24" stroke="#202124" stroke-width="2.2" stroke-linecap="round"/></svg>
<div class="a" style="left:211.00px;top:129.30px;width:814.40px;height:42.00px;background:#f0f4f9;border-radius:21px;"></div>
<div class="a" style="left:224.00px;top:143.79px;font-size:13.6px;line-height:1;color:#444746;font-weight:normal;white-space:nowrap;font-family:'Liberation Sans', sans-serif;">Actions</div>
<svg class="a" style="left:270.00px;top:149.00px;" width="10" height="6" viewBox="0 0 10 6"><path d="M0.5 0.5H9.5L5 5.5Z" fill="#444746"/></svg>
<div class="a" style="left:287.80px;top:140.00px;width:1.00px;height:20.70px;background:#c7c7c7;"></div>
<div class="a" style="left:440.50px;top:140.00px;width:1.00px;height:20.70px;background:#c7c7c7;"></div>
<div class="a" style="left:633.10px;top:140.00px;width:1.00px;height:20.70px;background:#c7c7c7;"></div>
<div class="a" style="left:784.80px;top:140.00px;width:1.00px;height:20.70px;background:#c7c7c7;"></div>
<div class="a" style="left:897.40px;top:140.00px;width:1.00px;height:20.70px;background:#c7c7c7;"></div>
<svg class="a" style="left:301.00px;top:145.00px;" width="16" height="15" viewBox="0 0 16 15"><path d="M5 2L1.8 5.2L5 8.4M2.2 5.2H9.5A4.2 4.2 0 0 1 9.5 13.6H4.2" fill="none" stroke="#444746" stroke-width="1.7"/></svg>
<svg class="a" style="left:335.00px;top:145.00px;" width="16" height="15" viewBox="0 0 16 15"><path d="M11 2L14.2 5.2L11 8.4M13.8 5.2H6.5A4.2 4.2 0 0 0 6.5 13.6H11.8" fill="none" stroke="#444746" stroke-width="1.7"/></svg>
<svg class="a" style="left:367.50px;top:142.50px;" width="17" height="19" viewBox="0 0 17 19"><rect x="4.2" y="1" width="11.6" height="4.8" rx="1" fill="none" stroke="#444746" stroke-width="1.7"/><path d="M4.2 3.4H1.2V9H8.5V12.2" fill="none" stroke="#444746" stroke-width="1.7"/><rect x="6.9" y="12.2" width="3.3" height="5.6" rx="0.8" fill="none" stroke="#444746" stroke-width="1.7"/></svg>
<svg class="a" style="left:400.00px;top:143.00px;" width="17" height="17" viewBox="0 0 17 17"><circle cx="6.5" cy="6.5" r="5.3" fill="none" stroke="#444746" stroke-width="1.7"/><path d="M6.5 4V9M4 6.5H9" stroke="#444746" stroke-width="1.6"/><path d="M10.4 10.4L15.6 15.6" stroke="#444746" stroke-width="1.8"/></svg>
<svg class="a" style="left:423.50px;top:148.50px;" width="10" height="6" viewBox="0 0 10 6"><path d="M0.5 0.5H9.5L5 5.5Z" fill="#444746"/></svg>
<div class="a" style="left:446.30px;top:135.00px;width:31.70px;height:31.30px;background:#d3e3fd;border-radius:4px;"></div>
<svg class="a" style="left:0.00px;top:0.00px;" width="1" height="1" viewBox="0 0 1 1"><path d="M457 144.2V157L460.6 152.6L461.5 151.8L467.3 152.4Z" fill="none" stroke="#1f1f1f" stroke-width="1.6" stroke-linejoin="round"/><path d="M460.6 152L464.3 159.3" stroke="#1f1f1f" stroke-width="2.2"/></svg>
<svg class="a" style="left:0.00px;top:0.00px;" width="1" height="1" viewBox="0 0 1 1"><circle cx="493.5" cy="149" r="4.6" fill="none" stroke="#444746" stroke-width="1.7"/><path d="M501.2 149.7H503.6V158.4H494.6V155.8" fill="none" stroke="#444746" stroke-width="1.7" stroke-linejoin="round"/></svg>
<svg class="a" style="left:522.00px;top:142.00px;" width="18" height="18" viewBox="0 0 18 18"><path d="M3 3L15 15" stroke="#444746" stroke-width="1.8"/><circle cx="2.8" cy="2.8" r="2" fill="#444746"/><circle cx="15.2" cy="15.2" r="2" fill="#444746"/></svg>
<svg class="a" style="left:549.50px;top:148.50px;" width="10" height="6" viewBox="0 0 10 6"><path d="M0.5 0.5H9.5L5 5.5Z" fill="#444746"/></svg>
<svg class="a" style="left:568.00px;top:143.00px;" width="20" height="15" viewBox="0 0 20 15"><path d="M1 2.2H11M6 2.2V14M11.5 6.6H18.3M14.9 6.6V14" stroke="#444746" stroke-width="2.1"/></svg>
<svg class="a" style="left:604.00px;top:143.00px;" width="18" height="17" viewBox="0 0 18 17"><rect x="1.6" y="1.6" width="14.2" height="14.2" rx="1.5" fill="none" stroke="#444746" stroke-width="1.9"/><path d="M4.5 12.5L7.2 9.2L9 11L11.2 8.4L13.6 12.5Z" fill="#444746"/></svg>
<svg class="a" style="left:645.00px;top:141.00px;" width="19" height="17" viewBox="0 0 19 17"><path d="M5.5 0.8L8 3.3M2.3 6.8L7.8 1.3L13.3 6.8L7.8 12.3Z" fill="none" stroke="#444746" stroke-width="1.7" stroke-linejoin="round"/><path d="M2.5 7H13L7.8 12.2Z" fill="#444746"/><path d="M15.5 10.5C14.5 12 14 12.8 14 13.5A1.5 1.5 0 0 0 17 13.5C17 12.8 16.5 12 15.5 10.5Z" fill="#444746"/></svg>
<svg class="a" style="left:682.00px;top:142.00px;" width="17" height="17" viewBox="0 0 17 17"><path d="M2.6 14.4V12.2L10.8 4L13 6.2L4.8 14.4Z" fill="none" stroke="#444746" stroke-width="1.5" stroke-linejoin="round"/><path d="M11.6 2.6L12.9 1.3L15.7 4.1L14.4 5.4Z" fill="#444746"/></svg>
<svg class="a" style="left:718.50px;top:144.00px;" width="17" height="15" viewBox="0 0 17 15"><rect x="0.7" y="1" width="15.6" height="2.8" fill="#444746"/><rect x="0.7" y="6" width="15.6" height="2.1" fill="#444746"/><rect x="0.7" y="10" width="15.6" height="1.6" fill="#444746"/><rect x="0.7" y="13" width="15.6" height="1.2" fill="#444746"/></svg>
<svg class="a" style="left:754.50px;top:144.00px;" width="17" height="15" viewBox="0 0 17 15"><rect x="0.7" y="1" width="15.6" height="2.4" fill="#444746"/><path d="M0.7 6.9H4.5M6.2 6.9H10.8M12.5 6.9H16.3" stroke="#444746" stroke-width="1.5"/><path d="M0.7 10.4H3M4.2 10.4H6.5M7.7 10.4H10M11.2 10.4H13.5M14.7 10.4H16.3" stroke="#444746" stroke-width="1.4"/><path d="M0.7 13.5H1.9M3.1 13.5H4.3M5.5 13.5H6.7M7.9 13.5H9.1M10.3 13.5H11.5M12.7 13.5H13.9M15.1 13.5H16.3" stroke="#444746" stroke-width="1.3"/></svg>
<div class="a" style="left:802.00px;top:143.10px;font-size:15px;line-height:1;color:#444746;font-weight:normal;white-space:nowrap;font-family:'Liberation Sans', sans-serif;">Arial</div>
<svg class="a" style="left:872.50px;top:147.50px;" width="10" height="6" viewBox="0 0 10 6"><path d="M0.5 0.5H9.5L5 5.5Z" fill="#444746"/></svg>
<div class="a" style="left:917.60px;top:145.70px;width:3.2px;height:3.2px;border-radius:50%;background:#444746"></div>
<div class="a" style="left:917.60px;top:150.30px;width:3.2px;height:3.2px;border-radius:50%;background:#444746"></div>
<div class="a" style="left:917.60px;top:154.80px;width:3.2px;height:3.2px;border-radius:50%;background:#444746"></div>
</div></div>
<div class="a" style="left:177px;top:144px;width:32.3px;height:25px;border-radius:12.5px;background:#1b6ef3;"></div>
<svg class="a" style="left:177.00px;top:144.00px;" width="32" height="25" viewBox="0 0 32 25"><path d="M16.2 5.4L23 10.2H19.6V13.8H12.8V10.2H9.4Z" fill="none" stroke="#fff" stroke-width="1.6" stroke-linejoin="round"/><rect x="12" y="15.6" width="8.6" height="3.8" rx="1.9" fill="none" stroke="#fff" stroke-width="1.5"/></svg>
</body></html>
